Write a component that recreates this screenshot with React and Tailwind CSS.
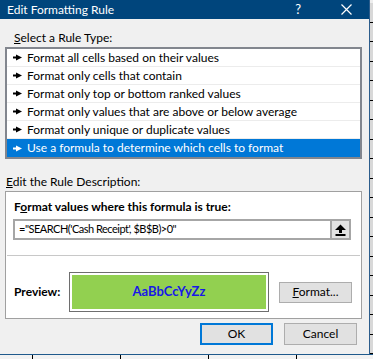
import React from "react";

const rules = [
  "Format all cells based on their values",
  "Format only cells that contain",
  "Format only top or bottom ranked values",
  "Format only values that are above or below average",
  "Format only unique or duplicate values",
  "Use a formula to determine which cells to format",
];

function RuleArrow({ color }) {
  return (
    <svg width="9" height="7" viewBox="0 0 9 7" className="shrink-0">
      <rect x="0" y="2.5" width="4" height="2" fill={color} />
      <polygon points="3,0.5 9,3.5 3,6.5" fill={color} />
    </svg>
  );
}

function UpArrow() {
  return (
    <svg width="11" height="12" viewBox="0 0 11 12">
      <polygon points="5.5,0.5 11,6 7,6 7,9 4,9 4,6 0,6" fill="#000" />
      <rect x="0.5" y="10" width="10" height="2" fill="#000" />
    </svg>
  );
}

export default function App() {
  const rows = Array.from({ length: 18 });
  return (
    <div
      className="w-[373px] h-[359px] overflow-hidden bg-[#e6e6e6] text-[12px] text-black"
      style={{ fontFamily: 'Lato, "Noto Sans", sans-serif' }}
    >
      <div className="flex h-[354px]">
        {/* Dialog */}
        <div className="w-[369px] h-[354px] bg-[#f0f0f0] flex flex-col">
          {/* Title bar */}
          <div className="h-[19px] bg-[#00457c] text-white flex items-center pl-[7px] leading-none">
            <span className="text-[12px]">Edit Formatting Rule</span>
            <span className="ml-auto mr-[40px] text-[13px]">?</span>
            <svg width="11" height="11" viewBox="0 0 11 11" className="mr-[17px]">
              <path d="M0.5 0.5 L10.5 10.5 M10.5 0.5 L0.5 10.5" stroke="#fff" strokeWidth="1.2" />
            </svg>
          </div>

          <div className="px-[5px] flex flex-col">
            <div className="mt-[10px] h-[18px] leading-[18px] pl-[9px]">
              <u>S</u>elect a Rule Type:
            </div>

            {/* Rule list */}
            <div className="w-[357px] border-2 border-[#82868e] bg-white">
              {rules.map((r, i) => {
                const sel = i === rules.length - 1;
                return (
                  <div
                    key={r}
                    className={
                      "h-[18px] flex items-center gap-[5px] pl-[6px] whitespace-nowrap " +
                      (sel
                        ? "bg-[#0078d7] text-white"
                        : "border-b border-[#ececec]")
                    }
                  >
                    <RuleArrow color={sel ? "#fff" : "#000"} />
                    <span>{r}</span>
                  </div>
                );
              })}
            </div>

            <div className="mt-[14px] h-[18px] leading-[18px] pl-[1px]">
              <u>E</u>dit the Rule Description:
            </div>

            {/* Description box */}
            <div className="w-[357px] h-[128px] border border-[#a0a0a0] bg-white flex flex-col">
              <div className="mt-[6px] pl-[8px] h-[18px] leading-[18px] font-bold">
                F<u>o</u>rmat values where this formula is true:
              </div>
              <div className="mt-[3px] ml-[7px] w-[338px] h-[21px] border-2 border-[#a6a6a6] flex items-center">
                <span className="pl-[4px] flex-1 whitespace-nowrap text-[11px] tracking-[-0.5px]">
                  ="SEARCH('Cash Receipt', $B$B)&gt;0"
                </span>
                <div className="w-[19px] h-[17px] bg-[#e3e3e3] border-l-2 border-[#a6a6a6] flex items-center justify-center">
                  <UpArrow />
                </div>
              </div>
              <div className="mt-[15px] mx-[1px] h-px bg-[#c8c8c8]" />
              <div className="flex items-center mt-[16px] pl-[8px]">
                <span className="font-bold w-[55px]">Preview:</span>
                <div className="w-[200px] h-[40px] border border-[#6e6e6e] p-[2px] bg-white">
                  <div className="w-full h-full bg-[#92d050] flex items-center justify-center font-bold text-[#1818e6] text-[13px]">
                    AaBbCcYyZz
                  </div>
                </div>
                <button className="ml-[10px] w-[73px] h-[21px] bg-[#e1e1e1] border border-[#adadad] leading-none">
                  <u>F</u>ormat...
                </button>
              </div>
            </div>

            {/* Buttons */}
            <div className="flex justify-end gap-[11px] mt-[4px] w-[352px]">
              <button className="w-[73px] h-[22px] bg-[#e1e1e1] border-2 border-[#0078d7] leading-none">
                OK
              </button>
              <button className="w-[73px] h-[22px] bg-[#e1e1e1] border border-[#adadad] leading-none">
                Cancel
              </button>
            </div>
          </div>
        </div>

        {/* Spreadsheet strip at the right */}
        <div className="w-px bg-[#2c5d8c]" />
        <div className="flex-1 bg-[#d8d8d8] flex flex-col">
          <div className="h-[13px] bg-[#eeeeee]" />
          {rows.map((_, i) => (
            <div key={i} className="h-[19.5px] border-b border-black shrink-0" />
          ))}
        </div>
      </div>

      {/* Spreadsheet row at the bottom */}
      <div className="h-px bg-[#1f5a8c]" />
      <div className="flex h-[4px] bg-[#f2f2f2]">
        <div className="w-[33px] border-r border-black" />
        <div className="w-[88px] border-r border-black" />
        <div className="w-[88px] border-r border-black" />
        <div className="w-[88px] border-r border-black" />
        <div className="flex-1" />
      </div>
    </div>
  );
}
